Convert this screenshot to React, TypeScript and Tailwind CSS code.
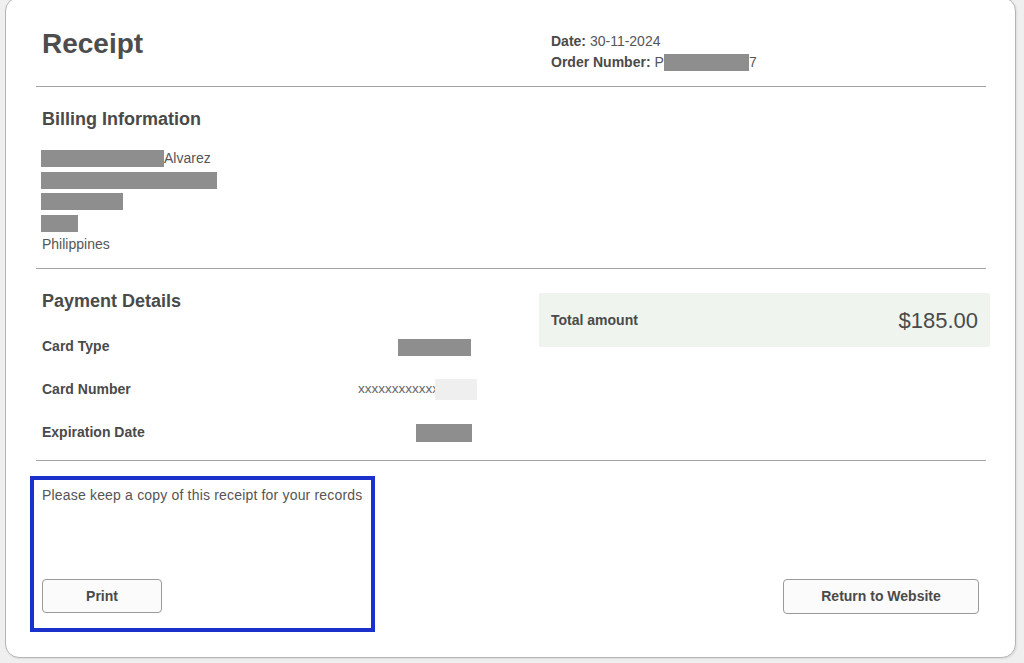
import React from "react";

const font = { fontFamily: '"Liberation Sans", Arial, sans-serif' };

function Bar({ w, h = 17 }: { w: number; h?: number }) {
  return <span className="inline-block bg-[#8e8e8e] align-middle" style={{ width: w, height: h }} />;
}

function PayRow({ label, children }: { label: string; children: React.ReactNode }) {
  return (
    <div className="flex h-[43px] items-center justify-between pl-[6px]">
      <span className="text-[14px] font-bold text-[#4a4a4a]">{label}</span>
      {children}
    </div>
  );
}

export default function App() {
  return (
    <div className="h-[663px] overflow-hidden bg-[#efefef] pl-[5px] pr-[8px]" style={font}>
      <div className="-mt-[3px] h-[661px] rounded-[14px] border border-[#b4b4b4] bg-white pl-[30px] pr-[29px] shadow-[1px_1px_2px_rgba(0,0,0,0.08)]">
        {/* header */}
        <div className="flex h-[89px] items-start border-b border-[#a3a3a3] pt-[29px]">
          <h1 className="w-[503px] pl-[6px] text-[28px] font-bold leading-[34px] text-[#4d4d4d]">Receipt</h1>
          <div className="mt-[4px] pl-[12px] text-[14px] leading-[21px] text-[#555]">
            <div>
              <span className="font-bold text-[#4a4a4a]">Date:</span> 30-11-2024
            </div>
            <div className="flex items-center">
              <span className="font-bold text-[#4a4a4a]">Order Number:</span>
              <span className="ml-[4px]">P</span>
              <Bar w={85} h={17} />
              <span>7</span>
            </div>
          </div>
        </div>

        {/* billing */}
        <div className="h-[182px] border-b border-[#a3a3a3] pt-[20px] pl-[6px]">
          <h2 className="text-[18px] font-bold leading-[24px] text-[#4a4a4a]">Billing Information</h2>
          <div className="mt-[17px] -ml-[1px] text-[14px] leading-[21.5px] text-[#555]">
            <div className="flex h-[21.5px] items-center">
              <Bar w={123} />
              <span>Alvarez</span>
            </div>
            <div className="flex h-[21.5px] items-center">
              <Bar w={176} />
            </div>
            <div className="flex h-[21.5px] items-center">
              <Bar w={82} />
            </div>
            <div className="flex h-[21.5px] items-center">
              <Bar w={37} />
            </div>
            <div className="ml-[1px]">Philippines</div>
          </div>
        </div>

        {/* payment */}
        <div className="flex h-[192px] border-b border-[#a3a3a3]">
          <div className="w-[441px] pt-[20px]">
            <h2 className="pl-[6px] text-[18px] font-bold leading-[24px] text-[#4a4a4a]">Payment Details</h2>
            <div className="mt-[12px]">
              <PayRow label="Card Type">
                <span className="mr-[6px]">
                  <Bar w={73} h={17} />
                </span>
              </PayRow>
              <PayRow label="Card Number">
                <span className="flex items-center">
                  <span className="text-[13.5px] text-[#666]">xxxxxxxxxxxx</span>
                  <span className="-ml-[4px] inline-block h-[21px] w-[42px] bg-[#efefef]" />
                </span>
              </PayRow>
              <PayRow label="Expiration Date">
                <span className="mr-[5px]">
                  <Bar w={56} h={18} />
                </span>
              </PayRow>
            </div>
          </div>
          <div className="ml-[62px] -mr-[4px] mt-[24px] flex h-[54px] flex-1 items-center justify-between bg-[#eff5ee] px-[12px]">
            <span className="text-[14px] font-bold text-[#4a4a4a]">Total amount</span>
            <span className="text-[22px] text-[#4a4a4a]">$185.00</span>
          </div>
        </div>

        {/* footer */}
        <div className="flex items-end justify-between pt-[15px]">
          <div className="-ml-[6px] flex h-[156px] w-[345px] flex-col justify-between border-[4px] border-[#1c31cc] pb-[15px] pl-[8px] pt-[5px]">
            <p className="text-[14px] leading-[20px] tracking-[0.18px] text-[#555]">Please keep a copy of this receipt for your records</p>
            <button className="h-[34px] w-[120px] rounded-[4px] border border-[#9a9a9a] bg-[#fbfbfb] text-[14px] font-bold text-[#4a4a4a]">
              Print
            </button>
          </div>
          <button className="mb-[18px] mr-[7px] h-[35px] w-[196px] rounded-[4px] border border-[#9a9a9a] bg-[#fbfbfb] text-[14px] font-bold text-[#4a4a4a]">
            Return to Website
          </button>
        </div>
      </div>
    </div>
  );
}
